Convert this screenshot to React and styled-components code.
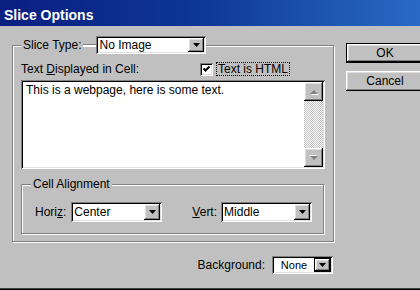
import React from 'react'
import styled, { createGlobalStyle } from 'styled-components';

const GlobalStyle = createGlobalStyle`
    body{
        margin: 0;
        background: #c0c0c0;
        font-family: "Liberation Sans", Arial, sans-serif;
        font-size: 12px;
        color: #000;
    }
`

const sunken = `
    box-shadow: inset 1px 1px 0 #808080, inset -1px -1px 0 #fff,
        inset 2px 2px 0 #000, inset -2px -2px 0 #dfdfdf;
`
const raised = `
    box-shadow: inset -1px -1px 0 #000, inset 1px 1px 0 #fff,
        inset -2px -2px 0 #808080, inset 2px 2px 0 #dfdfdf;
`

const Window = styled.div`
    width: 420px;
    height: 290px;
    box-sizing: border-box;
    overflow: hidden;
    background: #c0c0c0;
    display: flex;
    flex-direction: column;
    border-bottom: 1px solid #000;
    box-shadow: inset 0 -1px 0 #404040;
`
const TitleBar = styled.div`
    height: 26px;
    box-sizing: border-box;
    padding: 3px 4px 0;
    display: flex;
    align-items: center;
    background: linear-gradient(90deg, #0a1f80 0%, #0c3596 45%, #2a6ac6 100%);
    color: #fff;
    font-weight: bold;
    font-size: 14px;
`
const Main = styled.div`
    display: flex;
    gap: 12px;
    padding: 10px 0 0 12px;
`
const LeftCol = styled.div`
    display: flex;
    flex-direction: column;
    width: 322px;
`
const Group = styled.fieldset`
    margin: ${p => p.$inner ? '8px 0 0' : '0'};
    width: ${p => p.$inner ? '303px' : '322px'};
    min-width: 0;
    box-sizing: border-box;
    border: 1px solid #808080;
    box-shadow: inset 1px 1px 0 #fff, 1px 1px 0 #fff;
    padding: ${p => p.$inner ? '10px 9px 11px 9px' : '8px 8px 7px 8px'};
`
const Legend = styled.legend`
    padding: 0;
    margin: 0;
    display: flex;
    align-items: center;
`
const LegendText = styled.span`
    background: #c0c0c0;
    padding: 0 2px;
    line-height: ${p => p.$tall ? '18px' : '15px'};
`
const Rule = styled.span`
    width: 13px;
    height: 0;
    border-top: 1px solid #808080;
    border-bottom: 1px solid #fff;
`
const Select = styled.div`
    display: flex;
    width: ${p => p.$w}px;
    height: ${p => p.$h}px;
    box-sizing: border-box;
    padding: 2px;
    background: #fff;
    ${sunken}
`
const SelectText = styled.span`
    flex: 1;
    padding: 0 1px;
    display: flex;
    align-items: center;
    justify-content: ${p => p.$center ? 'center' : 'flex-start'};
    font-size: ${p => p.$small ? '11px' : '12px'};
    white-space: nowrap;
    overflow: hidden;
`
const ArrowButton = styled.span`
    width: ${p => p.$w || 16}px;
    box-sizing: border-box;
    background: #c0c0c0;
    display: flex;
    align-items: center;
    justify-content: center;
    ${raised}
    border: ${p => p.$framed ? '1px solid #000' : 'none'};
`
const TopRow = styled.div`
    display: grid;
    grid-template-columns: 179px auto;
    align-items: center;
    height: 14px;
    line-height: 14px;
`
const CheckWrap = styled.div`
    display: flex;
    align-items: center;
    gap: 3px;
`
const CheckBox = styled.span`
    width: 13px;
    height: 13px;
    box-sizing: border-box;
    padding: 2px;
    background: #fff;
    display: flex;
    ${sunken}
`
const FocusLabel = styled.span`
    border: 1px dotted #000;
    padding: 0 1px;
    line-height: 12px;
`
const TextBox = styled.div`
    margin-top: 4px;
    height: 89px;
    box-sizing: border-box;
    padding: 2px;
    display: flex;
    background: #fff;
    ${sunken}
`
const TextContent = styled.div`
    flex: 1;
    padding: 1px 3px;
    line-height: 15px;
`
const ScrollBar = styled.div`
    width: 19px;
    display: flex;
    flex-direction: column;
`
const ScrollButton = styled.span`
    height: 19px;
    background: #c0c0c0;
    display: flex;
    align-items: center;
    justify-content: center;
    ${raised}
`
const Track = styled.div`
    flex: 1;
    background-image: conic-gradient(#c0c0c0 25%, #fff 0 50%, #c0c0c0 0 75%, #fff 0);
    background-size: 2px 2px;
`
const AlignRow = styled.div`
    display: flex;
    align-items: center;
    padding-left: 4px;
`
const FieldLabel = styled.span`
    margin-right: ${p => p.$gap}px;
    margin-left: ${p => p.$offset || 0}px;
`
const BottomRow = styled.div`
    display: flex;
    justify-content: flex-end;
    align-items: center;
    gap: 7px;
    margin-top: 14px;
    padding-right: 1px;
`
const ButtonCol = styled.div`
    display: flex;
    flex-direction: column;
    gap: 8px;
    padding-top: 7px;
`
const Button = styled.button`
    width: 78px;
    height: 20px;
    flex: none;
    box-sizing: border-box;
    background: #c0c0c0;
    font-family: inherit;
    font-size: 12px;
    color: #000;
    padding: 0;
    border: ${p => p.$default ? '1px solid #000' : 'none'};
    ${raised}
`

const DownArrow = () => (
    <svg width="7" height="4" viewBox="0 0 7 4"><polygon points="0,0 7,0 3.5,4" fill="#000" /></svg>
)

const GreyArrow = ({ up }) => (
    <svg width="10" height="6" viewBox="0 0 10 6">
        <g transform={up ? '' : 'rotate(180 5 3)'}>
            <polygon points="1,5 9,5 5,1" fill="#fff" transform="translate(1 1)" />
            <polygon points="1,5 9,5 5,1" fill="#808080" />
        </g>
    </svg>
)

const Dropdown = ({ w, h, children }) => (
    <Select $w={w} $h={h}>
        <SelectText>{children}</SelectText>
        <ArrowButton><DownArrow /></ArrowButton>
    </Select>
)

const App = () => {
  return (
    <Window>
        <GlobalStyle />
        <TitleBar>Slice Options</TitleBar>
        <Main>
            <LeftCol>
                <Group>
                    <Legend>
                        <LegendText $tall>Slice Type:</LegendText>
                        <Rule />
                        <Dropdown w={110} h={18}>No Image</Dropdown>
                    </Legend>
                    <TopRow>
                        <span>Text <u>D</u>isplayed in Cell:</span>
                        <CheckWrap>
                            <CheckBox>
                                <svg width="9" height="9" viewBox="0 0 9 9">
                                    <polyline points="1.5,3.5 3.5,5.5 7.5,1.5" fill="none" stroke="#000" strokeWidth="2" />
                                </svg>
                            </CheckBox>
                            <FocusLabel>Text is HTML</FocusLabel>
                        </CheckWrap>
                    </TopRow>
                    <TextBox>
                        <TextContent>This is a webpage, here is some text.</TextContent>
                        <ScrollBar>
                            <ScrollButton><GreyArrow up /></ScrollButton>
                            <Track />
                            <ScrollButton><GreyArrow /></ScrollButton>
                        </ScrollBar>
                    </TextBox>
                    <Group $inner>
                        <Legend>
                            <LegendText>Cell Alignment</LegendText>
                        </Legend>
                        <AlignRow>
                            <FieldLabel $gap={5}>Hori<u>z</u>:</FieldLabel>
                            <Dropdown w={91} h={20}>Center</Dropdown>
                            <FieldLabel $gap={4} $offset={30}><u>V</u>ert:</FieldLabel>
                            <Dropdown w={91} h={20}>Middle</Dropdown>
                        </AlignRow>
                    </Group>
                </Group>
                <BottomRow>
                    <span>Background:</span>
                    <Select $w={61} $h={18}>
                        <SelectText $center $small>None</SelectText>
                        <ArrowButton $w={17} $framed><DownArrow /></ArrowButton>
                    </Select>
                </BottomRow>
            </LeftCol>
            <ButtonCol>
                <Button $default>OK</Button>
                <Button>Cancel</Button>
            </ButtonCol>
        </Main>
    </Window>
  )
}

export default App
